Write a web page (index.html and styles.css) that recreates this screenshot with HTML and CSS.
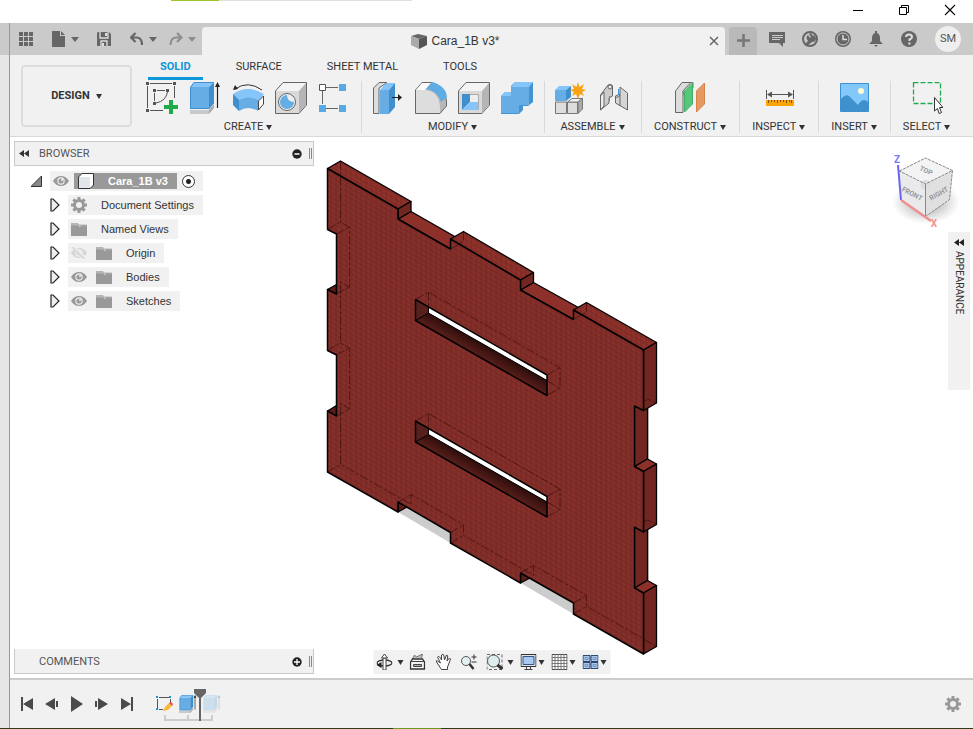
FILE: index.html
```html
<!DOCTYPE html>
<html lang="en">
<head>
	<title>Cara_1B v3*</title>
	<meta charset="UTF-8">
	<link rel="stylesheet" href="styles.css">
</head>
<body>
	<!-- shared icons -->
	<svg class="sprite">
		<symbol id="eye" viewBox="0 0 16 12">
			<path d="M0 6Q3 1 8 1T16 6Q13 11 8 11T0 6Z" fill="#999"/>
			<circle cx="8" cy="6" r="3.7" fill="#f1f1f1"/>
			<circle cx="8" cy="6" r="2.6" fill="#999"/>
			<circle cx="9" cy="5" r="1" fill="#f1f1f1"/>
		</symbol>
		<symbol id="folder" viewBox="0 0 16 13">
			<path d="M0 0H7L8 1.5H16V3H0Z" fill="#b5b5b5"/>
			<path d="M0 2.5H7L9 4L10 2.5H16V13H0Z" fill="#999"/>
		</symbol>
		<symbol id="gear" viewBox="0 0 16 16">
			<g fill="#999">
				<path id="cog" d="M6.5 0H9.5V16H6.5Z"/>
				<use href="#cog" transform="rotate(45 8 8)"/>
				<use href="#cog" transform="rotate(90 8 8)"/>
				<use href="#cog" transform="rotate(135 8 8)"/>
				<circle cx="8" cy="8" r="6"/>
			</g>
			<circle cx="8" cy="8" r="3" fill="#f1f1f1"/>
		</symbol>
		<symbol id="closed" viewBox="0 0 10 14">
			<path d="M1 1H3L9 7L3 13H1Z" fill="#eee" stroke="#222" stroke-width="1.2"/>
		</symbol>
		<symbol id="extrude" viewBox="0 0 32 32">
			<path d="M1 28L20 28L25 22V26L20 32H1Z" fill="#aaa"/>
			<path d="M1 28H20V32H1Z" fill="#c9c9c9"/>
			<path d="M1 5L5 0H25L20 5Z" fill="#85c5fa"/>
			<path d="M1 5H20V27H1Z" fill="#65ade4"/>
			<path d="M20 5L25 0V21L20 27Z" fill="#3f8fce"/>
			<path d="M1.500 27V5.500L5 .5H24.500V21L20 26.500H1.500" fill="none" stroke="#3f8fce"/>
			<path d="M28.500 26V3" stroke="#222" stroke-width="1.200"/>
			<path d="M26 5L28.500 0L31 5Z" fill="#222"/>
		</symbol>
	</svg>

	<header class="window-bar">
		<div class="loading"><span></span></div>
		<button aria-label="Minimize"><svg width="12" height="12"><path d="M1 6.500H11" stroke="#000"/></svg></button>
		<button aria-label="Restore"><svg width="12" height="12"><path d="M1.500 3.500H8.500V10.500H1.500ZM3.500 3V1.500H10.500V8.500H9" fill="none" stroke="#000"/></svg></button>
		<button aria-label="Close"><svg width="12" height="12"><path d="M1 1L11 11M11 1L1 11" stroke="#000" stroke-width="1.100"/></svg></button>
	</header>

	<div class="app">
		<div class="edge"></div>
		<main>
			<div class="tab-bar">
				<div class="quick">
					<button aria-label="Data panel"><svg width="15" height="15"><path d="M0 0H4V4H0ZM5 0H9V4H5ZM10 0H14V4H10ZM0 5H4V9H0ZM5 5H9V9H5ZM10 5H14V9H10ZM0 10H4V14H0ZM5 10H9V14H5ZM10 10H14V14H10Z" fill="#666"/></svg></button>
					<button aria-label="File"><svg width="14" height="16"><path d="M0 0H8V5H13V16H0Z" fill="#666"/><path d="M9 0L13 4H9Z" fill="#666"/></svg><i class="caret"></i></button>
					<button aria-label="Save"><svg width="15" height="15"><path d="M1 0H12L14 2V14H0V1Z" fill="#666"/><path d="M3 0V6H11V0M4 14V9H10V14" fill="none" stroke="#ddd" stroke-width="1.300"/><path d="M8 1H10V4H8ZM5 11H7V14H5Z" fill="#ddd"/></svg></button>
					<div class="history">
						<button aria-label="Undo"><svg width="14" height="14"><path d="M5.500 1L1 5.500L5.500 10M1 5.500H7Q12 6 12 13" fill="none" stroke="#666" stroke-width="2.200"/></svg><i class="caret"></i></button>
						<button class="faded" aria-label="Redo"><svg width="14" height="14"><path d="M8 1L12.500 5.500L8 10M12.500 5.500H7Q1.500 6 1.500 13" fill="none" stroke="#666" stroke-width="2"/></svg><i class="caret"></i></button>
					</div>
				</div>
				<div class="doc-tab">
					<h1><svg width="16" height="15"><path d="M0 2L7 0L16 2L8 5Z" fill="#666"/><path d="M0 2L8 5V15L0 11Z" fill="#aaa"/><path d="M8 5L16 2V11L8 15Z" fill="#555"/></svg>Cara_1B v3*</h1>
					<button aria-label="Close tab"><svg width="10" height="10"><path d="M1 1L9 9M9 1L1 9" stroke="#666" stroke-width="1.500"/></svg></button>
				</div>
				<button class="new-tab" aria-label="New tab"><svg width="13" height="13"><path d="M6.500 0V13M0 6.500H13" stroke="#777" stroke-width="2.600"/></svg></button>
				<div class="account">
					<button aria-label="Comments"><svg width="16" height="16"><path d="M0 1H16V12H14V16L10 12H0Z" fill="#666"/><path d="M3 4.500H14M3 6.500H14M3 8.500H11" stroke="#ccc"/></svg></button>
					<button aria-label="Extensions"><svg width="16" height="16"><circle cx="8" cy="8" r="7" fill="none" stroke="#666" stroke-width="2"/><path d="M2 14L6 10Q3 6 6 4L8 7L9 6L7 3L9 2L11 5L12 4L14 7Q14 11 10 11L5 15Z" fill="#666"/></svg></button>
					<button aria-label="Job status"><svg width="16" height="16"><circle cx="8" cy="8" r="8" fill="#666"/><circle cx="8" cy="8" r="6" fill="none" stroke="#ccc"/><path d="M8 4V8.500H12" fill="none" stroke="#ddd" stroke-width="1.500"/></svg></button>
					<button aria-label="Notifications"><svg width="16" height="16"><path d="M7 0H9V2Q12 3 12 7V10L15 13H1L4 10V7Q4 3 7 2ZM6 14H10L8 16Z" fill="#666"/></svg></button>
					<button aria-label="Help"><svg width="16" height="16"><circle cx="8" cy="8" r="8" fill="#666"/><path d="M5 6Q5 3.500 8 3.500T11 6Q11 7.500 8.500 8.500V10" fill="none" stroke="#ddd" stroke-width="2"/><path d="M7.300 11.500H9.500V13.500H7.300Z" fill="#ddd"/></svg></button>
				</div>
				<button class="avatar">SM</button>
			</div>

			<div class="ribbon">
				<button class="workspace">DESIGN<i class="caret"></i></button>
				<div class="tools">
					<nav class="tabs">
						<a href="#solid" class="selected">SOLID</a>
						<a href="#surface">SURFACE</a>
						<a href="#sheet">SHEET METAL</a>
						<a href="#tools">TOOLS</a>
					</nav>
					<div class="groups">
						<div class="group">
							<div class="icons">
								<button aria-label="Create sketch"><svg viewBox="0 0 32 32"><path d="M4 1.500H26M28.500 4V16M1.500 4V26M4 28.500H17M11 8.500H19M8.500 11V19M21.500 10Q20 19 10 21" fill="none" stroke="#555"/><path d="M0 0H3V3H0ZM27 0H30V3H27ZM0 27H3V30H0ZM7 7H10V10H7ZM20 7H23V10H20ZM7 20H10V23H7Z" fill="#555"/><path d="M23 18H27V23H32V27H27V32H23V27H18V23H23Z" fill="#20ab4b"/></svg></button>
								<button aria-label="Extrude"><svg><use href="#extrude"/></svg></button>
								<button aria-label="Revolve"><svg viewBox="0 0 32 32"><path d="M1 12Q16 2 32 12L27 19Q16 13 6 19Z" fill="#85c5fa"/><path d="M1 12L7 18V29L1 23Z" fill="#3f8fce"/><path d="M7 18Q16 13 26 18V29Q16 23 7 29Z" fill="#65ade4"/><path d="M26.500 19L31.500 14V22L26.500 28Z" fill="#fff" stroke="#444"/><path d="M3 7Q16-2 30 8" fill="none" stroke="#333"/><path d="M1 8L3 3L6 7Z" fill="#222"/></svg></button>
								<button aria-label="Hole"><svg viewBox="0 0 32 32"><path d="M1 9L8 1H31L24 9Z" fill="#f4f4f4"/><path d="M1 9H24V31H1Z" fill="#d9d9d9"/><path d="M24 9L31 1V23L24 31Z" fill="#b5b5b5"/><path d="M.5 9L8 .5H31.500V23L24 31.500H.5Z" fill="none" stroke="#666"/><circle cx="12" cy="20" r="8.500" fill="#eee" stroke="#666"/><path d="M12 13A7 7 0 1 0 19 20Q12 20 12 13Z" fill="#65ade4"/></svg></button>
								<button aria-label="Pattern"><svg viewBox="0 0 32 32"><path d="M8 5.500H20M4.500 9V22M8 26.500H20" stroke="#666"/><path d="M1.500 2.500H7.500V8.500H1.500Z" fill="#fff" stroke="#555"/><path d="M21 2H28V9H21ZM1 23H8V30H1ZM21 23H28V30H21Z" fill="#58a9e4"/></svg></button>
							</div>
							<button class="label">CREATE<i class="caret"></i></button>
						</div>
						<div class="group">
							<div class="icons">
								<button aria-label="Press pull"><svg viewBox="0 0 32 32"><path d="M1.500 31.500V6L7 .5H15L7 6V31.500Z" fill="#ddd" stroke="#666"/><path d="M8 8L14 1H23L17 8Z" fill="#85c5fa"/><path d="M8 8H17V32H8Z" fill="#65ade4"/><path d="M17 8L23 1V25L17 32Z" fill="#3f8fce"/><path d="M20 15.500H27" stroke="#222"/><path d="M26 12L30 15.500L26 19Z" fill="#222"/></svg></button>
								<button aria-label="Fillet"><svg viewBox="0 0 32 32"><path d="M.5 8L7 .5H16Q30 3 31.500 19V24L25 31.500H.5Z" fill="#b8b8b8" stroke="#666"/><path d="M1 8H10Q24 9 25 25V31H1Z" fill="#ddd"/><path d="M1 8L7 1H16L10 8Z" fill="#fafafa"/><path d="M11 7L17 0Q31 4 32 15L26 20Q23 9 11 7Z" fill="#5fabe4"/></svg></button>
								<button aria-label="Shell"><svg viewBox="0 0 32 32"><path d="M.5 9L8 .5H31.500V23L24 31.500H.5Z" fill="#f4f4f4" stroke="#666"/><path d="M1 9H24V31H1Z" fill="#d9d9d9"/><path d="M24 9L31 1V23L24 31Z" fill="#b5b5b5"/><path d="M4.500 12.500H20.500V27.500H4.500Z" fill="#eee" stroke="#aaa"/><path d="M4 12H12V20L4 28Z" fill="#3f8fce"/><path d="M12 20H20V28H4Z" fill="#85c5fa"/></svg></button>
								<button aria-label="Combine"><svg viewBox="0 0 32 32"><path d="M0 14L4 10H10V4L14 0H32V20L27 24H22V28L18 32H0Z" fill="#4494d2"/><path d="M0 14H10V5H28V23H18V31H0Z" fill="#65ade4"/><path d="M0 14L4 10H10V14ZM10 5L14 0H32L28 5Z" fill="#85c5fa"/></svg></button>
							</div>
							<button class="label">MODIFY<i class="caret"></i></button>
						</div>
						<div class="group">
							<div class="icons">
								<button aria-label="New component"><svg viewBox="0 0 32 32"><path d="M.5 20H11.500V31.500H.5ZM12.500 20H22.500V31.500H12.500Z" fill="#ddd" stroke="#777"/><path d="M12.500 20L17 16.500H27.500L23 20Z" fill="#f5f5f5" stroke="#777"/><path d="M23 20L27.500 16V27L23 31.500Z" fill="#aaa" stroke="#777"/><path d="M0 8H11V19H0Z" fill="#65ade4"/><path d="M0 8L4 4H16L11 8Z" fill="#85c5fa"/><path d="M11 8L16 4V15L11 19Z" fill="#3f8fce"/><path d="M23 0L24.500 5L29 2L27 7L31 8L27 10L29 14L25 12L23 17L21 12L17 14L19 10L15 8L19 7L17 2L21.500 5Z" fill="#f9a110"/></svg></button>
								<button aria-label="Joint"><svg viewBox="0 0 32 32"><path d="M2.500 13L10 3Q15 1 14.500 6V14L11 16V21L2.500 28Z" fill="#ccc" stroke="#666"/><path d="M2.500 14L6 10V24L2.500 28Z" fill="#eee" stroke="#666"/><circle cx="12" cy="5" r="2" fill="#eee" stroke="#666"/><path d="M22 5L29.500 11V28L17.500 21V14L22 12Z" fill="#d5d5d5" stroke="#666"/><path d="M22 12V24M17 14Q20 17 22 13" fill="none" stroke="#666"/><path d="M11.500 14V19M20.500 7V13" stroke="#3296dc"/></svg></button>
							</div>
							<button class="label">ASSEMBLE<i class="caret"></i></button>
						</div>
						<div class="group">
							<div class="icons">
								<button aria-label="Offset plane"><svg viewBox="0 0 32 32"><path d="M1.500 30.500V9L8 .5H17L9 9V30.500Z" fill="#ddd" stroke="#666"/><path d="M9 9L17 .5H19V6L11 16Z" fill="#fff" stroke="#777"/><path d="M10.500 9L18.500 1V22L10.500 30Z" fill="#55c77d" stroke="#43ad68"/><path d="M22.500 9L30.500 1V22L22.500 30Z" fill="#e69861" stroke="#d5834a"/></svg></button>
							</div>
							<button class="label">CONSTRUCT<i class="caret"></i></button>
						</div>
						<div class="group">
							<div class="icons">
								<button aria-label="Measure"><svg viewBox="0 0 32 32"><path d="M3.500 8V17M30.500 8V17M6 12.500H28" stroke="#555"/><path d="M4 12.500L9 9.500V15.500ZM30 12.500L25 9.500V15.500Z" fill="#555"/><path d="M3 18H31V24H3Z" fill="#fba50b"/><path d="M5.500 18V21M8.500 18V20M11.500 18V20M14.500 18V21M17.500 18V20M20.500 18V20M23.500 18V21M26.500 18V20M28.500 18V21" stroke="#7a5100"/></svg></button>
							</div>
							<button class="label">INSPECT<i class="caret"></i></button>
						</div>
						<div class="group">
							<div class="icons">
								<button aria-label="Insert canvas"><svg viewBox="0 0 32 32"><path d="M2.500 1.500H30.500V29.500H2.500Z" fill="#83c8fb" stroke="#3e91cc"/><circle cx="23" cy="9" r="3" fill="#fffbd0"/><path d="M3 17Q9 10 13 16L20 23Q25 15 30 20V29H3Z" fill="#3e91cc"/></svg></button>
							</div>
							<button class="label">INSERT<i class="caret"></i></button>
						</div>
						<div class="group">
							<div class="icons">
								<button aria-label="Select"><svg viewBox="0 0 32 32"><path d="M2.500 .5H29.500V21.500H2.500Z" fill="none" stroke="#21aa4d" stroke-width="1.300" stroke-dasharray="5 2"/><path d="M23.500 15.500V29L26.500 26.500L28 31.500L30.500 30.500L28.500 25.500H32Z" fill="#fff" stroke="#333"/></svg></button>
							</div>
							<button class="label">SELECT<i class="caret"></i></button>
						</div>
					</div>
				</div>
			</div>

			<div class="canvas">
				<div class="model">
					<svg width="341" height="505" viewBox="321 155 341 505">
						<defs>
							<pattern id="weave" width="5" height="5" patternUnits="userSpaceOnUse" patternTransform="skewY(30)">
								<path d="M0 0H5V2H0Z" fill="#000" opacity=".05"/>
								<path d="M0 0H2V5H0Z" fill="#000" opacity=".05"/>
								<path d="M3 3H5V5H3Z" fill="#f66" opacity=".04"/>
							</pattern>
							<linearGradient id="deep" x1="0" y1="0" x2="0" y2="21" gradientUnits="userSpaceOnUse" gradientTransform="translate(415 299) skewY(30)">
								<stop offset="0" stop-color="#1c0706"/>
								<stop offset="1" stop-color="#5a1f1b"/>
							</linearGradient>
							<path id="face" d="M327.500 168.500L398 209V219L450.500 249V239L520.500 280V290L573.500 319.500V310L643.500 350V410.500L634.500 406V466.500L643.500 471.500V532L634.500 527V588L643.500 593V654L573.500 614V603L520.500 573V583L450.500 543V532.500L398 502V512L327.500 472V411L336.500 416V355L327.500 350.500V289.500L336.500 294V234L327.500 229.500Z"/>
							<path id="slot" d="M415.500 299.500L547 375V395.500L415.500 320.500Z"/>
							<g id="opening" stroke-linejoin="round">
								<path d="M428.500 307L547 375V380.500L428.500 313Z" fill="#fff"/>
								<path d="M415.500 299.500L428.500 307V313L415.500 320.500Z" fill="#56201d"/>
								<path d="M415.500 320.500L428.500 313L547 380.500V395.500Z" fill="url(#deep)"/>
								<path d="M415.500 320.500L428.500 313L547 380.500M428.500 307V313" fill="none" stroke="#000"/>
								<use href="#slot" fill="none" stroke="#000" stroke-width="1.500"/>
							</g>
						</defs>
						<!-- ground shadow -->
						<path d="M398 512L407 505L450.500 532V543ZM520.500 583L530 576L573.500 603V614ZM647 405H649V465H647ZM647 527H649V586H647Z" fill="#ccc"/>
						<!-- side walls, back to front -->
						<g stroke="#000" stroke-width="1.300" stroke-linejoin="round">
							<path d="M327.500 411L336.500 405.500V416ZM327.500 289.500L336.500 284.500V294ZM398 502L407 507L398 512ZM520.500 573L530 578L520.500 583Z" fill="#5a1c19"/>
							<g fill="#8d302a">
								<path d="M398 219L411 211.500L463.500 241.500L450.500 249Z"/>
								<path d="M520.500 290L533.500 282.500L586.500 312L573.500 319.500Z"/>
								<path d="M327.500 168.500L340.500 161L411 201.500L398 209Z"/>
								<path d="M450.500 239L463.500 231.500L533.500 272.500L520.500 280Z"/>
								<path d="M573.500 310L586.500 302.500L656.500 342.500L643.500 350Z"/>
							</g>
							<g fill="#722622">
								<path d="M398 209L411 201.500V211.500L398 219Z"/>
								<path d="M520.500 280L533.500 272.500V282.500L520.500 290Z"/>
								<path d="M634.500 406L647.500 398.500V459L634.500 466.500Z"/>
								<path d="M634.500 527L647.500 519.500V580.500L634.500 588Z"/>
								<path d="M634.500 466.500L647.500 459L656.500 464L643.500 471.500ZM634.500 588L647.500 580.500L656.500 585.500L643.500 593Z" fill="#8d302a"/>
								<path d="M643.500 350L656.500 342.500V403L643.500 410.500Z"/>
								<path d="M643.500 471.500L656.500 464V524.500L643.500 532Z"/>
								<path d="M643.500 593L656.500 585.500V646.500L643.500 654Z"/>
							</g>
						</g>
						<use href="#face" fill="#842e29"/>
						<use href="#face" fill="url(#weave)" stroke="#000" stroke-width="1.500" stroke-linejoin="round"/>
						<path d="M327.500 168.500L340.500 161L411 201.500L398 209ZM450.500 239L463.500 231.500L533.500 272.500L520.500 280ZM573.500 310L586.500 302.500L656.500 342.500L643.500 350Z" fill="url(#weave)"/>
						<use href="#opening"/>
						<use href="#opening" y="121.500"/>
						<!-- hidden edges -->
						<g fill="none" stroke="#200" stroke-width=".8" stroke-dasharray="9 2 3 2" opacity=".6">
							<path d="M340.500 161V222L349.500 227V287L340.500 282V343L349.500 348V409L340.500 403.500V464.500L411 504.500V494.500L463.500 525V535.500L533.500 575.500V565.500L586.500 595.500V606.500L656.500 646.500"/>
							<path d="M327.500 229.500L340.500 222M336.500 234L349.500 227M336.500 294L349.500 287M327.500 350.500L340.500 343M336.500 355L349.500 348M336.500 416L349.500 409M327.500 472L340.500 464.500M398 502L411 494.500M450.500 532.500L463.500 525M450.500 543L463.500 535.500M520.500 573L533.500 565.500M573.500 603L586.500 595.500M573.500 614L586.500 606.500"/>
							<path d="M463.500 231.500V241.500L450.500 249M586.500 302.500V312L573.500 319.500M643.500 402L647.500 399L656.500 403M643.500 522L647.500 520L656.500 524"/>
							<path id="hidden-slot" d="M415.500 299.500L428.500 292L560 367.500V388L547 395.500M547 375L560 367.500M428.500 292V307M547 380.500L560 388"/>
							<use href="#hidden-slot" y="121.500"/>
						</g>
					</svg>
				</div>

				<div class="left-side">
					<div class="panel-head">
						<button class="fold" aria-label="Collapse browser"><svg width="10" height="7"><path d="M5 0V7L0 3.500ZM10 0V7L5 3.500Z" fill="#333"/></svg></button>
						<h2>BROWSER</h2>
						<button aria-label="Hide browser"><svg width="10" height="10"><circle cx="5" cy="5" r="4.700" fill="#222"/><path d="M2.500 5H7.500" stroke="#fff" stroke-width="1.500"/></svg></button>
						<span class="grip"></span>
					</div>
					<ul class="tree">
						<li class="root">
							<button class="toggle" aria-label="Collapse"><svg width="12" height="12"><path d="M10.500 1V11.500H0Z" fill="#888" stroke="#333"/></svg></button>
							<div class="node">
								<svg width="16" height="12"><use href="#eye"/></svg>
								<span class="name"><svg width="16" height="16"><path d="M.5 4L4 .5H15.500V12L12 15.500H.5Z" fill="#fff" stroke="#333"/><path d="M1 4H12V15H1Z" fill="#e3e6ea"/></svg>Cara_1B v3</span>
								<input type="radio" name="active" aria-label="Activate component" checked>
							</div>
						</li>
						<li>
							<button class="toggle" aria-label="Expand"><svg width="10" height="14"><use href="#closed"/></svg></button>
							<div class="node"><svg width="16" height="16"><use href="#gear"/></svg><span>Document Settings</span></div>
						</li>
						<li>
							<button class="toggle" aria-label="Expand"><svg width="10" height="14"><use href="#closed"/></svg></button>
							<div class="node"><svg width="16" height="13"><use href="#folder"/></svg><span>Named Views</span></div>
						</li>
						<li>
							<button class="toggle" aria-label="Expand"><svg width="10" height="14"><use href="#closed"/></svg></button>
							<div class="node"><svg width="16" height="12"><g opacity=".3"><use href="#eye"/></g><path d="M2 0L15 12" stroke="#f1f1f1" stroke-width="3"/><path d="M1 0L14 12" stroke="#d5d5d5" stroke-width="1.500"/></svg><svg width="16" height="13"><use href="#folder"/></svg><span>Origin</span></div>
						</li>
						<li>
							<button class="toggle" aria-label="Expand"><svg width="10" height="14"><use href="#closed"/></svg></button>
							<div class="node"><svg width="16" height="12"><use href="#eye"/></svg><svg width="16" height="13"><use href="#folder"/></svg><span>Bodies</span></div>
						</li>
						<li>
							<button class="toggle" aria-label="Expand"><svg width="10" height="14"><use href="#closed"/></svg></button>
							<div class="node"><svg width="16" height="12"><use href="#eye"/></svg><svg width="16" height="13"><use href="#folder"/></svg><span>Sketches</span></div>
						</li>
					</ul>
					<div class="panel-head comments">
						<h2>COMMENTS</h2>
						<button aria-label="Show comments"><svg width="10" height="10"><circle cx="5" cy="5" r="4.700" fill="#222"/><path d="M2 5H8M5 2V8" stroke="#fff" stroke-width="1.300"/></svg></button>
						<span class="grip"></span>
					</div>
				</div>

				<div class="view-bar">
					<button class="drop orbit" aria-label="Orbit"><svg width="16" height="16"><ellipse cx="8" cy="9" rx="7.500" ry="3" fill="none" stroke="#333" stroke-width="1.300"/><path d="M6.500 16V4H9.500V16Z" fill="#fff" stroke="#444"/><path d="M8 0L11 4H5Z" fill="#fff" stroke="#444"/><path d="M0 11L5 8V14Z" fill="#222"/></svg><i class="caret"></i></button>
					<button aria-label="Look at"><svg width="16" height="16"><path d="M3 5L5 1L7 3L13 0L12 4" fill="#bbb" stroke="#777"/><path d="M1 8L3 5H13L15 8V15H1Z" fill="#f3f3f3" stroke="#333" stroke-width="1.300"/><path d="M1 7.500H15M4 10.500H12V12.500H4Z" fill="#aaa" stroke="#444"/></svg></button>
					<button aria-label="Pan"><svg width="16" height="16"><path d="M5 14L1 8Q0 6 2 7L5 9L2 3Q3 1 5 4L6 6L6 1Q8-1 8.500 2L9 6L11 1Q13 1 12 4L11.500 7L14 4Q16 4 14 8L12 13V15.500H6Z" fill="#fff" stroke="#444"/></svg></button>
					<button aria-label="Zoom"><svg width="17" height="16"><circle cx="5.500" cy="7" r="4.500" fill="#e1f1f3" stroke="#555"/><path d="M9 10L13 15" stroke="#333" stroke-width="2.500"/><path d="M11 3H16M13.500 .5V5.500M11 8H16" stroke="#333"/></svg></button>
					<button class="drop window" aria-label="Zoom window"><svg width="17" height="16"><path d="M.5 .5H15.500V15.500H.5Z" fill="none" stroke="#666" stroke-dasharray="3 2"/><circle cx="7" cy="7" r="6" fill="#dceff0" stroke="#555"/><path d="M11 11L16 15" stroke="#333" stroke-width="3"/></svg><i class="caret"></i></button>
					<button class="drop" aria-label="Display settings"><svg width="16" height="16"><path d="M.5 .5H15.500V12.500H.5Z" fill="#e5e5e5" stroke="#333"/><path d="M2.500 2.500H13.500V10.500H2.500Z" fill="#a9caef" stroke="#325690"/><path d="M6 13V15.500H10V13M4 15.500H12" fill="none" stroke="#444"/></svg><i class="caret"></i></button>
					<button class="drop" aria-label="Grid"><svg width="16" height="16"><path d="M.5 .5H15.500V15.500H.5Z" fill="#fff" stroke="#444"/><path d="M3.500 0V16M6.500 0V16M9.500 0V16M12.500 0V16M0 3.500H16M0 6.500H16M0 9.500H16M0 12.500H16" stroke="#777"/></svg><i class="caret"></i></button>
					<button class="drop" aria-label="Viewports"><svg width="16" height="14"><path d="M.5 .5H7.500V6.500H.5ZM8.500 .5H15.500V6.500H8.500ZM.5 7.500H7.500V13.500H.5ZM8.500 7.500H15.500V13.500H8.500Z" fill="#a9c8ec" stroke="#2e4670"/><path d="M2.500 2.500H5.500V4.500H2.500ZM10.500 2.500H13.500V4.500H10.500ZM2.500 9.500H5.500V11.500H2.500ZM10.500 9.500H13.500V11.500H10.500Z" fill="none" stroke="#7597c4"/></svg><i class="caret"></i></button>
				</div>

				<div class="right-side">
					<svg class="cube" width="80" height="84" viewBox="885 148 80 84">
						<defs>
							<radialGradient id="blur"><stop offset="0" stop-color="#777" stop-opacity=".8"/><stop offset="1" stop-color="#999" stop-opacity="0"/></radialGradient>
						</defs>
						<ellipse cx="926" cy="202" rx="34" ry="22" fill="url(#blur)"/>
						<path d="M899.500 171L925.500 158L952.500 170.500L925.500 184Z" fill="#f3f3f3"/>
						<path d="M899.500 171L925.500 184V216.500L901 199.500Z" fill="#eaeaec"/>
						<path d="M925.500 184L952.500 170.500L949.500 199.500L925.500 216.500Z" fill="#e0e0e1"/>
						<circle cx="925.500" cy="185" r="5" fill="#dcdde2"/>
						<path d="M899.500 171L925.500 158L952.500 170.500L925.500 184ZM952.500 170.500L949.500 199.500L925.500 216.500" fill="none" stroke="#888" stroke-dasharray="3 1"/>
						<path d="M925.500 184V216.500L901 199.500" fill="none" stroke="#888"/>
						<path d="M898 165L901 200" stroke="#6a64f0" stroke-width="2"/>
						<path d="M901 200L931 221" stroke="#f09090" stroke-width="2.500"/>
						<g text-anchor="middle">
							<text x="926" y="173" transform="rotate(24 926 171)">TOP</text>
							<text x="912" y="196" transform="rotate(27 912 194)">FRONT</text>
							<text x="939" y="196" transform="rotate(-30 939 194)">RIGHT</text>
							<text class="axis z" x="897" y="163">Z</text>
							<text class="axis x" x="934" y="227">X</text>
						</g>
					</svg>
					<button class="appearance"><svg width="10" height="7"><path d="M5 0V7L0 3.500ZM10 0V7L5 3.500Z" fill="#222"/></svg>APPEARANCE</button>
				</div>
			</div>

			<footer class="timeline">
				<div class="player">
					<button aria-label="Go to start"><svg width="14" height="14"><path d="M1 0H3V14H1ZM13 1V13L3 7Z" fill="#4a4a4a"/></svg></button>
					<button aria-label="Step back"><svg width="14" height="14"><path d="M10 1V13L0 7ZM11 4H13V10H11Z" fill="#4a4a4a"/></svg></button>
					<button aria-label="Play"><svg width="14" height="16"><path d="M1 0L13 8L1 16Z" fill="#4a4a4a"/></svg></button>
					<button aria-label="Step forward"><svg width="14" height="14"><path d="M3 1L13 7L3 13ZM0 4H2V10H0Z" fill="#4a4a4a"/></svg></button>
					<button aria-label="Go to end"><svg width="14" height="14"><path d="M1 1V13L11 7ZM11 0H13V14H11Z" fill="#4a4a4a"/></svg></button>
				</div>
				<div class="features">
					<button aria-label="Sketch1"><svg width="18" height="18"><path d="M4 2.500H14M2.500 4V13M15.500 4V8M4 14.500H8" stroke="#555"/><path d="M1 1H3V3H1ZM14 1H16V3H14ZM1 13H3V15H1Z" fill="#2090dc"/><path d="M8 16L10 12L14 8L17 11L13 15Z" fill="#f8b840"/><path d="M14 8L16 7L18 9L17 11Z" fill="#e84545"/></svg></button>
					<button aria-label="Extrude1"><svg width="18" height="18"><use href="#extrude"/></svg></button>
					<button class="undone" aria-label="Extrude2"><svg width="18" height="18"><use href="#extrude"/></svg></button>
					<svg class="marker" width="50" height="34"><path d="M1 26V31H48V26M24 26V31" fill="none" stroke="#ccc" stroke-width="2"/><path d="M30 0H42V4L37 9V32H35V9L30 4Z" fill="#666"/></svg>
				</div>
				<button class="settings" aria-label="Timeline settings"><svg width="16" height="16"><use href="#gear"/></svg></button>
			</footer>
		</main>
	</div>
	<div class="taskbar"><span></span></div>
</body>
</html>
```
FILE: styles.css
```css
*{
	margin: 0;
	padding: 0;
	box-sizing: border-box;
}
body{
	height: 100vh;
	display: flex;
	flex-direction: column;
	overflow: hidden;
	background: #fff;
	color: #333;
	font: 11px/14px Roboto, "Liberation Sans", sans-serif;
}
button{
	display: flex;
	align-items: center;
	justify-content: center;
	border: 0;
	background: none;
	color: inherit;
	font: inherit;
}
svg{
	display: block;
	flex: none;
}
ul{
	list-style: none;
}
.sprite{
	position: absolute;
	width: 0;
	height: 0;
}
.caret{
	border: 3px solid transparent;
	border-top: 5px solid #333;
	border-bottom: 0;
}

/* window frame */
.window-bar{
	height: 23px;
	display: flex;
	flex: none;
}
.window-bar button{
	width: 46px;
	height: 20px;
}
.loading{
	width: 241px;
	height: 1px;
	margin: 0 auto 0 171px;
	background: #e0e0e0;
}
.loading span{
	display: block;
	width: 48px;
	height: 1px;
	background: #9fc52b;
}
.taskbar{
	flex: none;
	height: 1px;
	background: #2f3a12;
}
.taskbar span{
	display: block;
	width: 48px;
	height: 1px;
	margin-left: 393px;
	background: #6f9a1c;
}
.app{
	flex: 1;
	display: flex;
	min-height: 0;
}
.edge{
	width: 10px;
	flex: none;
	border-right: 1px solid #999;
	background: linear-gradient(#cacaca 32px, #e6e6e6 32px);
}
main{
	flex: 1;
	min-width: 0;
	display: flex;
	flex-direction: column;
}

/* document tabs */
.tab-bar{
	height: 32px;
	flex: none;
	display: flex;
	align-items: flex-end;
	background: #cacaca;
}
.quick{
	height: 32px;
	display: flex;
	align-items: center;
	gap: 18px;
	padding: 0 6px 0 9px;
}
.quick .caret{
	margin-left: 5px;
	border-width: 5px 4px 0;
	border-top-color: #666;
}
.history{
	display: flex;
	gap: 12px;
}
.faded{
	opacity: .6;
}
.doc-tab{
	flex: 1;
	height: 28px;
	display: flex;
	align-items: center;
	padding-right: 6px;
	border-radius: 4px 4px 0 0;
	background: #f1f1f1;
}
.doc-tab h1{
	flex: 1;
	display: flex;
	align-items: center;
	justify-content: center;
	gap: 4px;
	font: 12px/16px "Liberation Sans", sans-serif;
}
.new-tab{
	width: 28px;
	height: 28px;
	margin: 0 12px 0 4px;
	padding-bottom: 2px;
	border-radius: 4px 4px 0 0;
	background: #b9b9b9;
}
.account{
	height: 32px;
	display: flex;
	align-items: center;
	gap: 17px;
}
.avatar{
	width: 26px;
	height: 26px;
	margin: 0 12px 3px 18px;
	border-radius: 50%;
	background: #eee;
	color: #555;
}

/* ribbon */
.ribbon{
	flex: none;
	display: flex;
	padding-left: 11px;
	background: #f1f1f1;
	border-bottom: 1px solid #d9d9d9;
}
.workspace{
	width: 111px;
	height: 62px;
	margin: 10px 4px 9px 0;
	gap: 6px;
	border: 2px solid #ddd;
	border-radius: 4px;
	font-weight: bold;
}
.tabs{
	display: flex;
	gap: 21px;
	padding-left: 12px;
}
.tabs a{
	height: 25px;
	padding: 5px 12px 0;
	color: #333;
	text-decoration: none;
}
.tabs .selected{
	border-bottom: 3px solid #0d96d8;
	color: #0d96d8;
	font-weight: bold;
}
.groups{
	display: flex;
	padding-top: 1px;
}
.group{
	padding: 1px 11px 0 10px;
	border-right: 1px solid #d9d9d9;
}
.group:last-child{
	border: 0;
}
.icons{
	display: flex;
	justify-content: center;
	gap: 11px;
	margin-bottom: 5px;
}
.icons svg{
	width: 32px;
	height: 32px;
}
.label{
	gap: 3px;
	margin: 0 auto;
	padding: 2px 2px 0;
	line-height: 12px;
}

/* canvas */
.canvas{
	flex: 1;
	min-height: 0;
	position: relative;
	display: flex;
	justify-content: space-between;
}
.model{
	position: absolute;
	inset: 0;
	display: flex;
	align-items: center;
	justify-content: center;
}
.left-side{
	position: relative;
	width: 300px;
	margin: 4px 0 4px 4px;
	display: flex;
	flex-direction: column;
}
.panel-head{
	height: 25px;
	display: flex;
	align-items: center;
	gap: 7px;
	padding: 0 1px 0 4px;
	border: 1px solid #c9c9c9;
	background: #f1f1f1;
	color: #555;
}
.panel-head h2{
	flex: 1;
	padding-left: 3px;
	font: inherit;
}
.comments{
	margin-top: auto;
	padding-top: 1px;
	padding-left: 21px;
	border-top: 0;
}
.grip{
	width: 3px;
	height: 11px;
	border: solid #888;
	border-width: 0 1px;
}
.tree{
	padding-top: 5px;
	font: 11px/20px "Liberation Sans", sans-serif;
}
.tree li{
	display: flex;
	height: 20px;
	margin-bottom: 4px;
	padding-left: 36px;
}
.tree .root{
	padding-left: 17px;
}
.toggle{
	width: 18px;
	justify-content: flex-start;
}
.root .toggle{
	width: 19px;
}
.node{
	display: flex;
	align-items: center;
	gap: 9px;
	padding: 0 9px 0 3px;
	background: #f1f1f1;
}
.node span{
	padding-left: 5px;
}
.root .node{
	gap: 5px;
	padding-right: 8px;
}
.node .name{
	display: flex;
	align-items: center;
	gap: 14px;
	height: 16px;
	padding: 0 9px 0 4px;
	background: #999;
	color: #fff;
	font-weight: bold;
}
.node input{
	appearance: none;
	width: 13px;
	height: 13px;
	border: 1px solid #333;
	border-radius: 50%;
	background: radial-gradient(#222 2px, #fff 3px);
}
.view-bar{
	position: absolute;
	left: 50%;
	bottom: 4px;
	transform: translateX(-50%);
	height: 24px;
	display: flex;
	padding-right: 2px;
	background: #f1f1f1;
}
.view-bar button{
	width: 26px;
}
.view-bar .drop{
	width: 31px;
	gap: 2px;
	padding-right: 2px;
	justify-content: flex-end;
}
.view-bar .orbit{
	gap: 5px;
	padding-right: 1px;
}
.view-bar .window{
	width: 33px;
	gap: 4px;
}
.right-side{
	position: relative;
	margin-top: 11px;
	display: flex;
	flex-direction: column;
	align-items: flex-end;
}
.cube{
	margin-right: 8px;
}
.cube text{
	fill: #999;
	font: bold 7px Roboto, sans-serif;
}
.cube .axis{
	font-size: 10px;
}
.cube .z{
	fill: #7d78f5;
}
.cube .x{
	fill: #f58f8f;
}
.appearance{
	width: 22px;
	height: 158px;
	margin-right: 3px;
	padding-top: 7px;
	gap: 5px;
	justify-content: flex-start;
	background: #f1f1f1;
	font-size: 10px;
	writing-mode: vertical-rl;
}

/* timeline */
.timeline{
	height: 50px;
	flex: none;
	display: flex;
	align-items: center;
	padding: 0 12px 0 10px;
	border-top: 2px solid #ccc;
	background: #f1f1f1;
}
.player{
	display: flex;
	gap: 11px;
}
.features{
	position: relative;
	display: flex;
	gap: 6px;
	margin-left: 21px;
}
.undone{
	opacity: .25;
}
.marker{
	position: absolute;
	left: 9px;
	top: -6px;
}
.settings{
	margin-left: auto;
}
```
